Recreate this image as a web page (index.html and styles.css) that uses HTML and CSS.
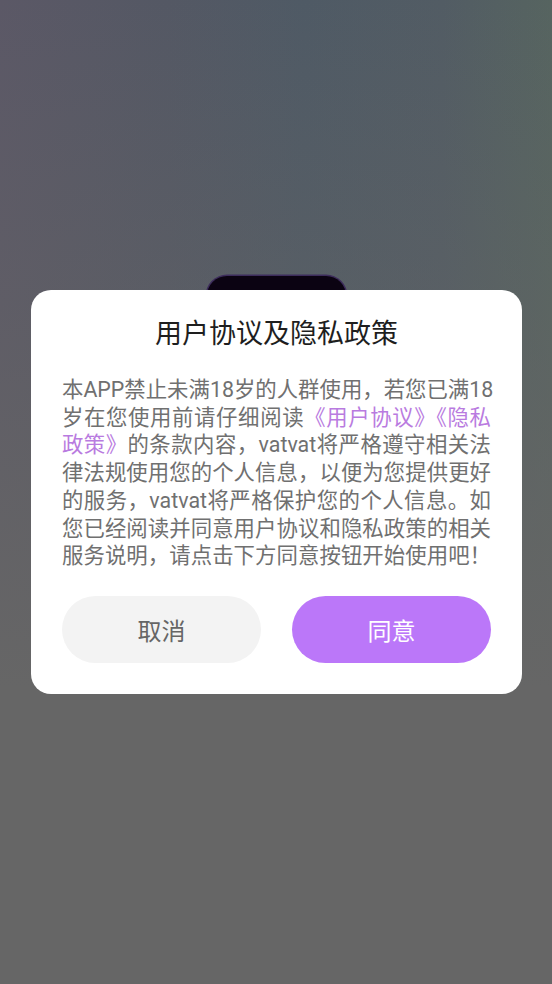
FILE: index.html
```html
<!DOCTYPE html>
<html lang="zh-CN">
<head>
<meta charset="utf-8">
<link rel="stylesheet" href="styles.css">
</head>
<body>
<div class="screen">
  <div class="logo-peek"></div>
  <div class="dialog">
    <h1 class="title">用户协议及隐私政策</h1>
    <p class="body">
      <span class="line">本APP禁止未满18岁的人群使用，若您已满18</span>
      <span class="line">岁在您使用前请仔细阅读<span class="link">《用户协议》《隐私</span></span>
      <span class="line"><span class="link">政策》</span>的条款内容，vatvat将严格遵守相关法</span>
      <span class="line">律法规使用您的个人信息，以便为您提供更好</span>
      <span class="line">的服务，vatvat将严格保护您的个人信息。如</span>
      <span class="line">您已经阅读并同意用户协议和隐私政策的相关</span>
      <span class="line">服务说明，请点击下方同意按钮开始使用吧！</span>
    </p>
    <div class="actions">
      <button class="btn btn-cancel">取消</button>
      <button class="btn btn-agree">同意</button>
    </div>
  </div>
</div>
</body>
</html>
```

FILE: styles.css
```css
* { box-sizing: border-box; }
html, body { margin: 0; padding: 0; }
body {
  font-family: Roboto, "Noto Sans CJK SC", sans-serif;
}
.screen {
  position: relative;
  width: 552px;
  height: 984px;
  overflow: hidden;
  background:
    linear-gradient(to bottom, rgba(102,102,102,0) 0%, rgba(102,102,102,0.35) 30%, #666666 70%),
    linear-gradient(to right, #5b5866 0%, #545864 30%, #4f5a65 55%, #525c64 80%, #566460 100%);
  padding-top: 290px;
}
.logo-peek {
  position: absolute;
  left: 207px;
  top: 276px;
  width: 139px;
  height: 60px;
  border-radius: 20px;
  background: #0b0312;
  box-shadow: 0 0 0 1.5px #3d2c5c;
}
.dialog {
  position: relative;
  margin: 0 30px 0 31px;
  background: #ffffff;
  border-radius: 20px;
  padding: 25px 31px 31px;
}
.title {
  margin: 0;
  text-align: center;
  font-size: 27px;
  line-height: 38px;
  font-weight: 400;
  color: #1e1e1e;
}
.body {
  margin: 23px 0 0;
  font-size: 21.4px;
  line-height: 27.7px;
  color: #707070;
}
.line {
  display: block;
  text-align: justify;
  text-align-last: justify;
  white-space: nowrap;
}
.line:first-child { padding-right: 3px; }
.link { color: #b97be0; }
.actions {
  display: flex;
  gap: 31px;
  margin-top: 26px;
}
.btn {
  flex: 1;
  height: 67px;
  border: none;
  border-radius: 34px;
  font-family: inherit;
  font-size: 24px;
  padding: 0;
}
.btn-cancel { background: #f3f3f3; color: #666666; }
.btn-agree { background: #bb77f9; color: #ffffff; }
```
